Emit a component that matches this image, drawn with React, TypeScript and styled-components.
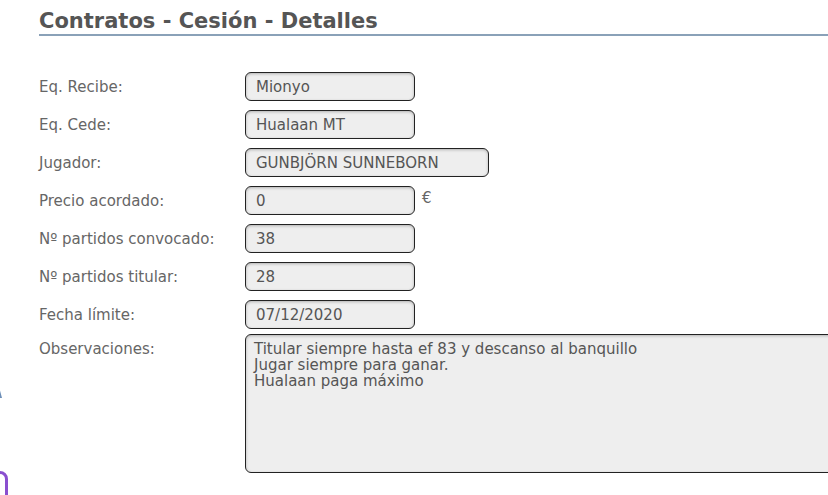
import React from "react";
import styled, { createGlobalStyle } from "styled-components";

const Global = createGlobalStyle`
  html, body { margin: 0; padding: 0; background: #fff; overflow: hidden; }
  body { width: 828px; height: 495px; position: relative; font-family: "DejaVu Sans", Verdana, sans-serif; }
`;

const Page = styled.div`
  padding: 8px 0 0 39px;
`;

const Title = styled.h1`
  margin: 0;
  font-family: "DejaVu Sans", Verdana, sans-serif;
  font-weight: bold;
  font-size: 21px;
  line-height: 26px;
  color: #555;
  border-bottom: 2px solid #8aa1b8;
  padding-bottom: 0px;
`;

const Form = styled.div`
  display: grid;
  grid-template-columns: 206px 1fr;
  row-gap: 9px;
  margin-top: 36px;
  align-items: center;
`;

const Label = styled.label<{ $top?: boolean }>`
  font-size: 15px;
  color: #666;
  align-self: ${(p) => (p.$top ? "start" : "center")};
  padding-top: ${(p) => (p.$top ? "4px" : "0")};
  margin-top: ${(p) => (p.$top ? "-2px" : "0")};
`;

const FieldRow = styled.div`
  display: flex;
  align-items: center;
  gap: 7px;
`;

const Input = styled.div<{ $w: number }>`
  box-sizing: border-box;
  width: ${(p) => p.$w}px;
  height: 29px;
  border: 1.5px solid #222;
  border-radius: 6px;
  background: #eee;
  box-shadow: inset 0 1px 3px rgba(0, 0, 0, 0.25);
  font-size: 15px;
  color: #555;
  padding: 0 0 0 10px;
  display: flex;
  align-items: center;
`;

const Unit = styled.span`
  font-size: 15px;
  color: #666;
  margin-top: -6px;
`;

const TextArea = styled.div`
  box-sizing: border-box;
  width: 640px;
  height: 139px;
  margin-top: -4px;
  border: 1.5px solid #222;
  border-radius: 6px;
  background: #eee;
  box-shadow: inset 0 1px 3px rgba(0, 0, 0, 0.25);
  font-size: 15px;
  line-height: 16px;
  color: #555;
  padding: 6px 8px;
  white-space: pre-line;
`;

const EdgeBlue = styled.div`
  position: absolute;
  left: -4px;
  top: 389px;
  width: 6px;
  height: 9px;
  background: #6d8fb8;
  clip-path: polygon(0 100%, 60% 0, 100% 100%);
`;

const EdgePurple = styled.div`
  position: absolute;
  left: -20px;
  top: 471px;
  width: 22px;
  height: 40px;
  border: 3px solid #8a4fcf;
  border-radius: 8px;
`;

const rows: { label: string; value: string; w: number; unit?: string }[] = [
  { label: "Eq. Recibe:", value: "Mionyo", w: 170 },
  { label: "Eq. Cede:", value: "Hualaan MT", w: 170 },
  { label: "Jugador:", value: "GUNBJÖRN SUNNEBORN", w: 244 },
  { label: "Precio acordado:", value: "0", w: 170, unit: "€" },
  { label: "Nº partidos convocado:", value: "38", w: 170 },
  { label: "Nº partidos titular:", value: "28", w: 170 },
  { label: "Fecha límite:", value: "07/12/2020", w: 170 },
];

export default function App() {
  return (
    <>
      <Global />
      <Page>
        <Title>Contratos - Cesión - Detalles</Title>
        <Form>
          {rows.map((r) => (
            <React.Fragment key={r.label}>
              <Label>{r.label}</Label>
              <FieldRow>
                <Input $w={r.w}>{r.value}</Input>
                {r.unit && <Unit>{r.unit}</Unit>}
              </FieldRow>
            </React.Fragment>
          ))}
          <Label $top>Observaciones:</Label>
          <TextArea>
            {"Titular siempre hasta ef 83 y descanso al banquillo\nJugar siempre para ganar.\nHualaan paga máximo"}
          </TextArea>
        </Form>
      </Page>
      <EdgeBlue />
      <EdgePurple />
    </>
  );
}
